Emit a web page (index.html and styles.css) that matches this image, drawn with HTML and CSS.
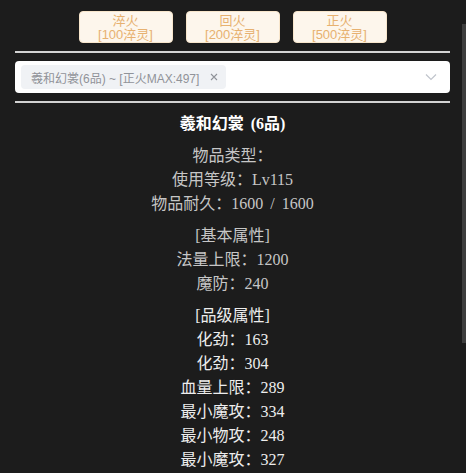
FILE: index.html
```html
<!DOCTYPE html>
<html lang="zh">
<head>
<meta charset="utf-8">
<title>羲和幻裳</title>
<link rel="stylesheet" href="styles.css">
</head>
<body>
<div class="page">
  <div class="btn-row">
    <button class="fire-btn" disabled>淬火<br>[100淬灵]</button>
    <button class="fire-btn" disabled>回火<br>[200淬灵]</button>
    <button class="fire-btn" disabled>正火<br>[500淬灵]</button>
  </div>
  <div class="divider"></div>
  <div class="select">
    <span class="tag">
      <span class="tag-text">羲和幻裳(6品) ~ [正火MAX:497]</span>
      <svg class="tag-close" width="8" height="8" viewBox="0 0 8 8"><path d="M1 1L7 7M7 1L1 7" stroke="#909399" stroke-width="1.1" fill="none"/></svg>
    </span>
    <svg class="arrow" width="12" height="8" viewBox="0 0 12 8"><polyline points="1,1.5 6,6.5 11,1.5" stroke="#c0c4cc" stroke-width="1.2" fill="none"/></svg>
  </div>
  <div class="divider"></div>
  <div class="detail">
    <div class="title">羲和幻裳 (6品)</div>
    <div class="group">
      <div class="line">物品类型：</div>
      <div class="line">使用等级：Lv115</div>
      <div class="line">物品耐久：1600 / 1600</div>
    </div>
    <div class="group">
      <div class="line">[基本属性]</div>
      <div class="line">法量上限：1200</div>
      <div class="line">魔防：240</div>
    </div>
    <div class="group group-bright">
      <div class="line">[品级属性]</div>
      <div class="line">化劲：163</div>
      <div class="line">化劲：304</div>
      <div class="line">血量上限：289</div>
      <div class="line">最小魔攻：334</div>
      <div class="line">最小物攻：248</div>
      <div class="line">最小魔攻：327</div>
    </div>
  </div>
  <div class="scrollbar"></div>
</div>
</body>
</html>
```

FILE: styles.css
```css
html, body {
  margin: 0;
  padding: 0;
  background: #1c1c1c;
  overflow: hidden;
  height: 100%;
}

.page {
  position: relative;
  height: 473px;
  padding: 11px 16px 0 15px;
  box-sizing: border-box;
  font-family: "Liberation Serif", "Noto Sans CJK SC", serif;
}

.btn-row {
  display: flex;
  justify-content: center;
  gap: 13px;
}

.fire-btn {
  width: 94px;
  height: 32px;
  padding: 1px 0 0;
  background: #fdf6ec;
  border: 1px solid #f8e6cc;
  border-radius: 4px;
  color: #e7b170;
  font-family: "Liberation Sans", "Noto Sans CJK SC", sans-serif;
  font-size: 13px;
  line-height: 14px;
  text-align: center;
  cursor: not-allowed;
}

.divider {
  height: 2px;
  background: #d2d2d2;
  margin-top: 8px;
}

.select {
  margin-top: 8px;
  height: 32px;
  background: #ffffff;
  border-radius: 4px;
  display: flex;
  align-items: center;
  padding: 0 13px 0 6px;
  justify-content: space-between;
}

.tag {
  display: flex;
  align-items: center;
  height: 24px;
  padding: 0 8px 0 10px;
  background: #f0f2f5;
  border-radius: 4px;
  color: #909399;
  font-family: "Liberation Sans", "Noto Sans CJK SC", sans-serif;
  font-size: 12px;
  gap: 11px;
}

.tag-text {
  white-space: nowrap;
}

.tag-close {
  display: block;
}

.arrow {
  display: block;
}

.detail {
  margin-top: 9px;
  text-align: center;
  font-size: 16px;
  line-height: 24px;
  word-spacing: 3px;
  color: #c6c6c6;
}

.title {
  color: #ffffff;
  font-weight: bold;
  font-size: 16px;
}

.group {
  margin-top: 8px;
}

.group-bright {
  color: #ededed;
}

.scrollbar {
  position: absolute;
  top: 24px;
  right: 0;
  width: 4px;
  height: 319px;
  background: #3e3e3e;
}
```
